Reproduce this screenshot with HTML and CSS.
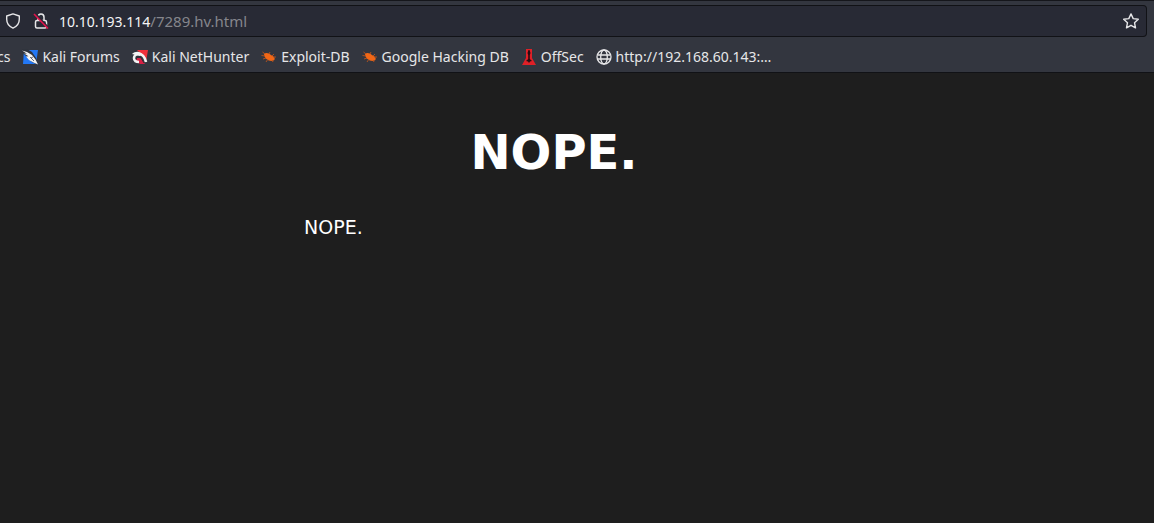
FILE: index.html
```html
<!DOCTYPE html>
<html lang="en">
<head>
    <meta charset="UTF-8">
    <meta name="viewport" content="width=device-width, initial-scale=1.0">
    <title>NOPE.</title>
    <link rel="stylesheet" href="styles.css">
</head>
<body>
    <header class="toolbar">
        <div class="url-bar">
            <button class="icon-button" type="button" aria-label="Tracking protection">
                <svg width="16" height="16" viewBox="0 0 16 16" fill="none" stroke="#e6e6e8" stroke-width="1.4" stroke-linejoin="round">
                    <path d="M8 .9 14.3 3v3.3c0 4.400-2.400 7.200-6.300 8.800C4.100 13.500 1.700 10.700 1.700 6.300V3z"/>
                </svg>
            </button>
            <button class="icon-button lock" type="button" aria-label="Connection not secure">
                <svg width="16" height="16" viewBox="0 0 16 16" fill="none" stroke="#e6e6e8" stroke-width="1.5">
                    <path d="M5 7V4.300C5 2.300 6.200 1 8 1s3 1.300 3 3.300V7M4 7.500h8c1 0 1.500.5 1.500 1.500v4.500c0 1-.5 1.500-1.500 1.500H4c-1 0-1.500-.5-1.500-1.500V9c0-1 .5-1.500 1.500-1.500z"/>
                    <path stroke="#282a35" stroke-width="2.5" d="M2.500 1 14.500 14"/>
                    <path stroke="#e3124b" stroke-width="1.6" d="M1 1 15 15.500"/>
                </svg>
            </button>
            <a class="address" href="#">10.10.193.114<span class="path">/7289.hv.html</span></a>
            <button class="icon-button" type="button" aria-label="Bookmark this page">
                <svg width="16" height="16" viewBox="0 0 16 16" fill="none" stroke="#e6e6e8" stroke-width="1.4" stroke-linejoin="round">
                    <path d="m8 .9 2.200 4.700 5.100.6-3.800 3.500 1 5.100L8 12.300l-4.500 2.500 1-5.100L.7 6.200l5.100-.6z"/>
                </svg>
            </button>
        </div>
        <nav class="bookmarks">
            <a href="#">cs</a>
            <a href="#">
                <svg width="16" height="16" viewBox="0 0 16 16">
                    <path fill="#2378f5" d="M2 1h14l-2 14H1z"/>
                    <path fill="#30343d" d="M0 0h5l5 3 4 6 2 5-2 1-4-2-9-9z"/>
                    <path fill="#f4f4f4" d="M0 1.500 5 3l5 3 3.500 4.500L16 15.500l-4.500-2L7 11 4 7.500l2.500-.2L2 4.500l3 .3z"/>
                    <path fill="none" stroke="#30343d" stroke-width=".7" d="m8 8 4 4M9 9l2-1"/>
                </svg>
                Kali Forums
            </a>
            <a href="#">
                <svg width="16" height="16" viewBox="0 0 16 16">
                    <path fill="#f0303a" d="M5 1h11l-2 12-4-7z"/>
                    <path fill="#d71f43" d="M5 9h4l4 6H8l-4-3z"/>
                    <path fill="none" stroke="#f4f4f4" stroke-width="2.600" d="M7 13c-3 0-5-1-5-4 0-2 2-4 5-4 4 0 6 4 7 8"/>
                    <path fill="#f4f4f4" d="M0 5c3-3 8-3 10 0L8 7z"/>
                    <path fill="none" stroke="#282b33" stroke-width=".9" d="M4 10c1-2 3-3 5-1l3 5"/>
                </svg>
                Kali NetHunter
            </a>
            <a href="#">
                <svg width="16" height="16" viewBox="0 0 16 16">
                    <path fill="#f26716" d="M3 5c2-2 5-1 7 1l3 2c1 1 1 3-.5 3.500C9 13 3 10 3 5z"/>
                    <path fill="none" stroke="#b9541d" stroke-width=".9" d="M4 5 1.500 3M4 7l-3.500-.5M5 9l-3 1M7 10l-2 3M8 5l1-2M11 7l2-2M12 8h3M11 11l1 2"/>
                </svg>
                Exploit-DB
            </a>
            <a href="#">
                <svg width="16" height="16" viewBox="0 0 16 16">
                    <path fill="#f26716" d="M3 5c2-2 5-1 7 1l3 2c1 1 1 3-.5 3.500C9 13 3 10 3 5z"/>
                    <path fill="none" stroke="#b9541d" stroke-width=".9" d="M4 5 1.500 3M4 7l-3.500-.5M5 9l-3 1M7 10l-2 3M8 5l1-2M11 7l2-2M12 8h3M11 11l1 2"/>
                </svg>
                Google Hacking DB
            </a>
            <a href="#">
                <svg width="16" height="16" viewBox="0 0 16 16">
                    <path fill="#df2027" d="M5 0h6v9l4 7H1l4-7z"/>
                    <path fill="#260e12" d="M7.500 1h1l1 3-.7 2v4l2.200 2-2 .5L8 14l-1-1.500-2-.5L7.200 10V6l-.7-2z"/>
                </svg>
                OffSec
            </a>
            <a href="#">
                <svg width="16" height="16" viewBox="0 0 16 16" fill="none" stroke="#e6e6e8" stroke-width="1.3">
                    <circle cx="8" cy="8" r="7"/>
                    <ellipse cx="8" cy="8" rx="3.300" ry="7"/>
                    <path d="M1.500 6h13M1.500 10h13"/>
                </svg>
                http://192.168.60.143:…
            </a>
        </nav>
    </header>

    <main class="page">
        <div class="message">
            <h1>NOPE.</h1>
            <p>NOPE.</p>
        </div>
    </main>
</body>
</html>
```

FILE: styles.css
```css
body {
    margin: 0;
    background-color: #1e1e1e;
    color: white;
    font-family: "DejaVu Sans", sans-serif;
}
.toolbar {
    background-color: #33363f;
    border-top: 1px solid #15161b;
    border-bottom: 1px solid #111216;
    padding-top: 4px;
    font-family: "Noto Sans", sans-serif;
    font-size: 14px;
    color: #e6e6e8;
}
.url-bar {
    display: flex;
    align-items: center;
    height: 30px;
    margin-right: 7px;
    padding: 0 7px 0 5px;
    background-color: #282a35;
    border: 1px solid #111216;
    border-left: none;
    border-radius: 0 4px 4px 0;
}
.icon-button {
    display: flex;
    padding: 0;
    border: none;
    background: none;
    cursor: pointer;
}
.lock {
    margin-left: 12px;
}
.address {
    flex: 1;
    margin-left: 10px;
    color: #f4f4f6;
    text-decoration: none;
}
.path {
    font-size: 15px;
    color: #85868c;
}
.bookmarks {
    display: flex;
    gap: 12px;
    margin-left: -3px;
    padding: 6px 0 2px;
    white-space: nowrap;
}
.bookmarks a {
    display: flex;
    align-items: center;
    gap: 4px;
    height: 27px;
    color: #e6e6e8;
    text-decoration: none;
}
.page {
    padding: 49px 46px 0 0;
}
.message {
    max-width: 500px;
    margin: 0 auto;
}
h1 {
    margin: 0;
    font-size: 48px;
    line-height: 60px;
    text-align: center;
}
p {
    margin: 33px 0 0;
    font-size: 19px;
    line-height: 24px;
}
```
